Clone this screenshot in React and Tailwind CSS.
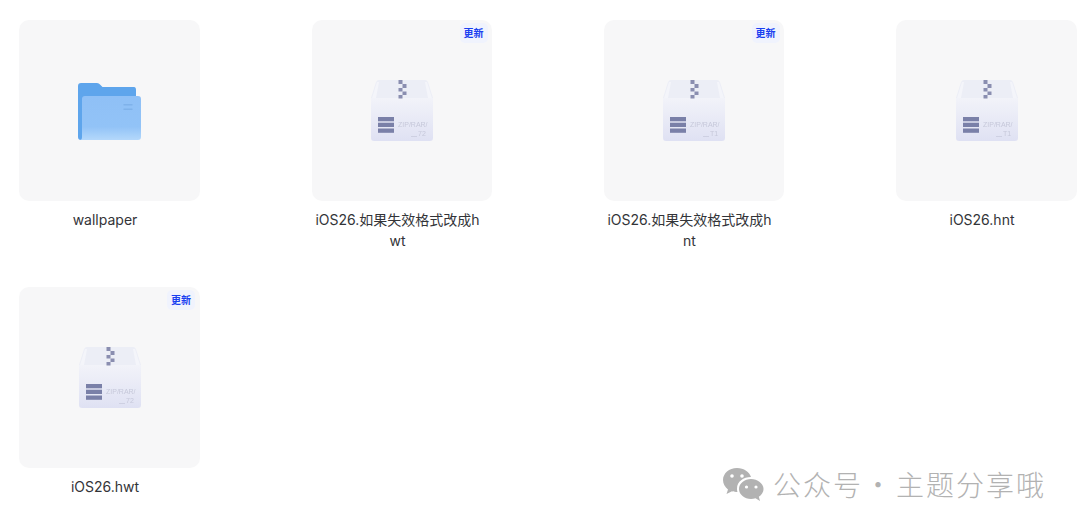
const FONT = "font-['Inter','Liberation_Sans','Noto_Sans_CJK_SC',sans-serif]";

function FolderIcon() {
  return (
    <svg width="64" height="58" viewBox="0 0 64 58" className="blur-[0.3px]">
      <defs>
        <linearGradient id="folderFront" x1="0" y1="0" x2="0" y2="1">
          <stop offset="0" stopColor="#8fc0f6" />
          <stop offset="0.7" stopColor="#92c3f7" />
          <stop offset="1" stopColor="#b4d8fb" />
        </linearGradient>
      </defs>
      <path d="M0 3 Q0 0 3 0 H19 Q21 0 22 1.500 L24.500 4 H56 Q58 4 58 7 V20 H4 V57 H3 Q0 57 0 54 Z" fill="#5ea5ec" />
      <path d="M4 16 Q4 13 7 13 H60 Q63 13 63 16 V54 Q63 57 60 57 H2 Q4 57 4 54 Z" fill="url(#folderFront)" />
      <rect x="45.500" y="21" width="9" height="1.500" fill="#7fb2ea" />
      <rect x="45.500" y="25.500" width="9" height="1.500" fill="#7fb2ea" />
    </svg>
  );
}

function ArchiveIcon({ label }) {
  return (
    <svg width="64" height="62" viewBox="0 0 64 62" className="blur-[0.4px]">
      <defs>
        <linearGradient id="boxBody" x1="0" y1="0" x2="0" y2="1">
          <stop offset="0" stopColor="#f2f3f9" />
          <stop offset="1" stopColor="#dfe1f3" />
        </linearGradient>
      </defs>
      <path d="M9 0 H55 Q57 0 58 2 L63 18 H1 L6 2 Q7 0 9 0 Z" fill="#eceef6" />
      <path d="M1 18 H63 V58 Q63 61 60 61 H4 Q1 61 1 58 Z" fill="url(#boxBody)" />
      <path d="M2 18 L7 2 H9 L6 18 Z" fill="#f4f5fa" />
      <path d="M62 18 L57 2 H55 L58 18 Z" fill="#f4f5fa" />
      <g fill="#8a8eb0">
        <rect x="28.500" y="0" width="4" height="4" />
        <rect x="32.500" y="4" width="4" height="4" />
        <rect x="28.500" y="8" width="4" height="3.500" />
        <rect x="32.500" y="11.500" width="4" height="3.500" />
        <rect x="28.500" y="15" width="4" height="3.500" />
      </g>
      <g fill="#7a80a8">
        <rect x="8" y="37" width="16" height="4.300" />
        <rect x="8" y="42.700" width="16" height="4.300" />
        <rect x="8" y="48.500" width="16" height="4.300" />
      </g>
      <text x="28" y="47" fontSize="7" fill="#c6c8da" fontFamily="Liberation Sans">ZIP/RAR/</text>
      <text x="48" y="56" fontSize="7" fill="#c6c8da" fontFamily="Liberation Sans">{label}</text>
      <rect x="41" y="56" width="6" height="0.700" fill="#c6c8da" />
    </svg>
  );
}

function FileCard({ name, type, label, updated }) {
  return (
    <div className="w-[180.5px] h-[267px]">
      <div className="relative w-[180.5px] h-[181px] rounded-[10px] bg-[#f7f7f8] flex items-center justify-center">
        {type === "folder" ? (
          <div className="mt-[3px] ml-[1px]"><FolderIcon /></div>
        ) : (
          <div className="mt-[1px] ml-[1px]"><ArchiveIcon label={label} /></div>
        )}
        {updated && (
          <span className="absolute top-[3px] right-[4.5px] px-[4px] h-[20px] leading-[20px] rounded-[5px] bg-[#f0f3fd] text-[10px] font-bold text-[#1a3ff0]">
            更新
          </span>
        )}
      </div>
      <p className="mt-[8px] w-[172px] text-center text-[14px] leading-[21px] break-all text-[#333438]">
        {name}
      </p>
    </div>
  );
}

const files = [
  { name: "wallpaper", type: "folder" },
  { name: "iOS26.如果失效格式改成hwt", type: "zip", label: "72", updated: true },
  { name: "iOS26.如果失效格式改成hnt", type: "zip", label: "T1", updated: true },
  { name: "iOS26.hnt", type: "zip", label: "T1" },
  { name: "iOS26.hwt", type: "zip", label: "72", updated: true },
];

export default function App() {
  return (
    <div className={`relative w-[1080px] h-[527px] overflow-hidden bg-white ${FONT}`}>
      <div className="pt-[20px] pl-[19px] grid grid-cols-[292.5px_292px_292.5px_181px]">
        {files.map((f) => (
          <FileCard key={f.name} {...f} />
        ))}
      </div>
      <div className="absolute left-[722px] top-[465px] flex items-center text-[#b2b2b2] text-[28px] leading-[36px] tracking-[2px] whitespace-nowrap font-['Noto_Sans_CJK_SC',sans-serif] font-light">
        <svg width="42" height="35" viewBox="0 0 42 35" fill="#b2b2b2" className="mt-[2px]">
          <path d="M15 1 C7 1 1 6.500 1 13 C1 17 3 20 6 22.500 L4.500 27 L10 24.200 C12 24.800 13.500 25 15.500 25 C15 23.500 15 22.500 15 21.500 C15 14.500 21.500 10 29 10 C27.500 5 22 1 15 1 Z" />
          <path d="M29 12 C22.500 12 17 16.500 17 22 C17 27.500 22.500 32 29 32 C30.500 32 32 31.700 33.500 31.200 L38 34 L36.800 29.800 C39.700 27.800 41.500 25 41.500 22 C41.500 16.500 35.500 12 29 12 Z" />
          <circle cx="10" cy="9" r="1.800" fill="#fff" />
          <circle cx="20" cy="9" r="1.800" fill="#fff" />
          <circle cx="24.500" cy="20" r="1.600" fill="#fff" />
          <circle cx="34" cy="20" r="1.600" fill="#fff" />
        </svg>
        <span className="ml-[9px]">公众号</span>
        <span className="ml-[-1px] w-[34px] text-center">·</span>
        <span>主题分享哦</span>
      </div>
    </div>
  );
}
